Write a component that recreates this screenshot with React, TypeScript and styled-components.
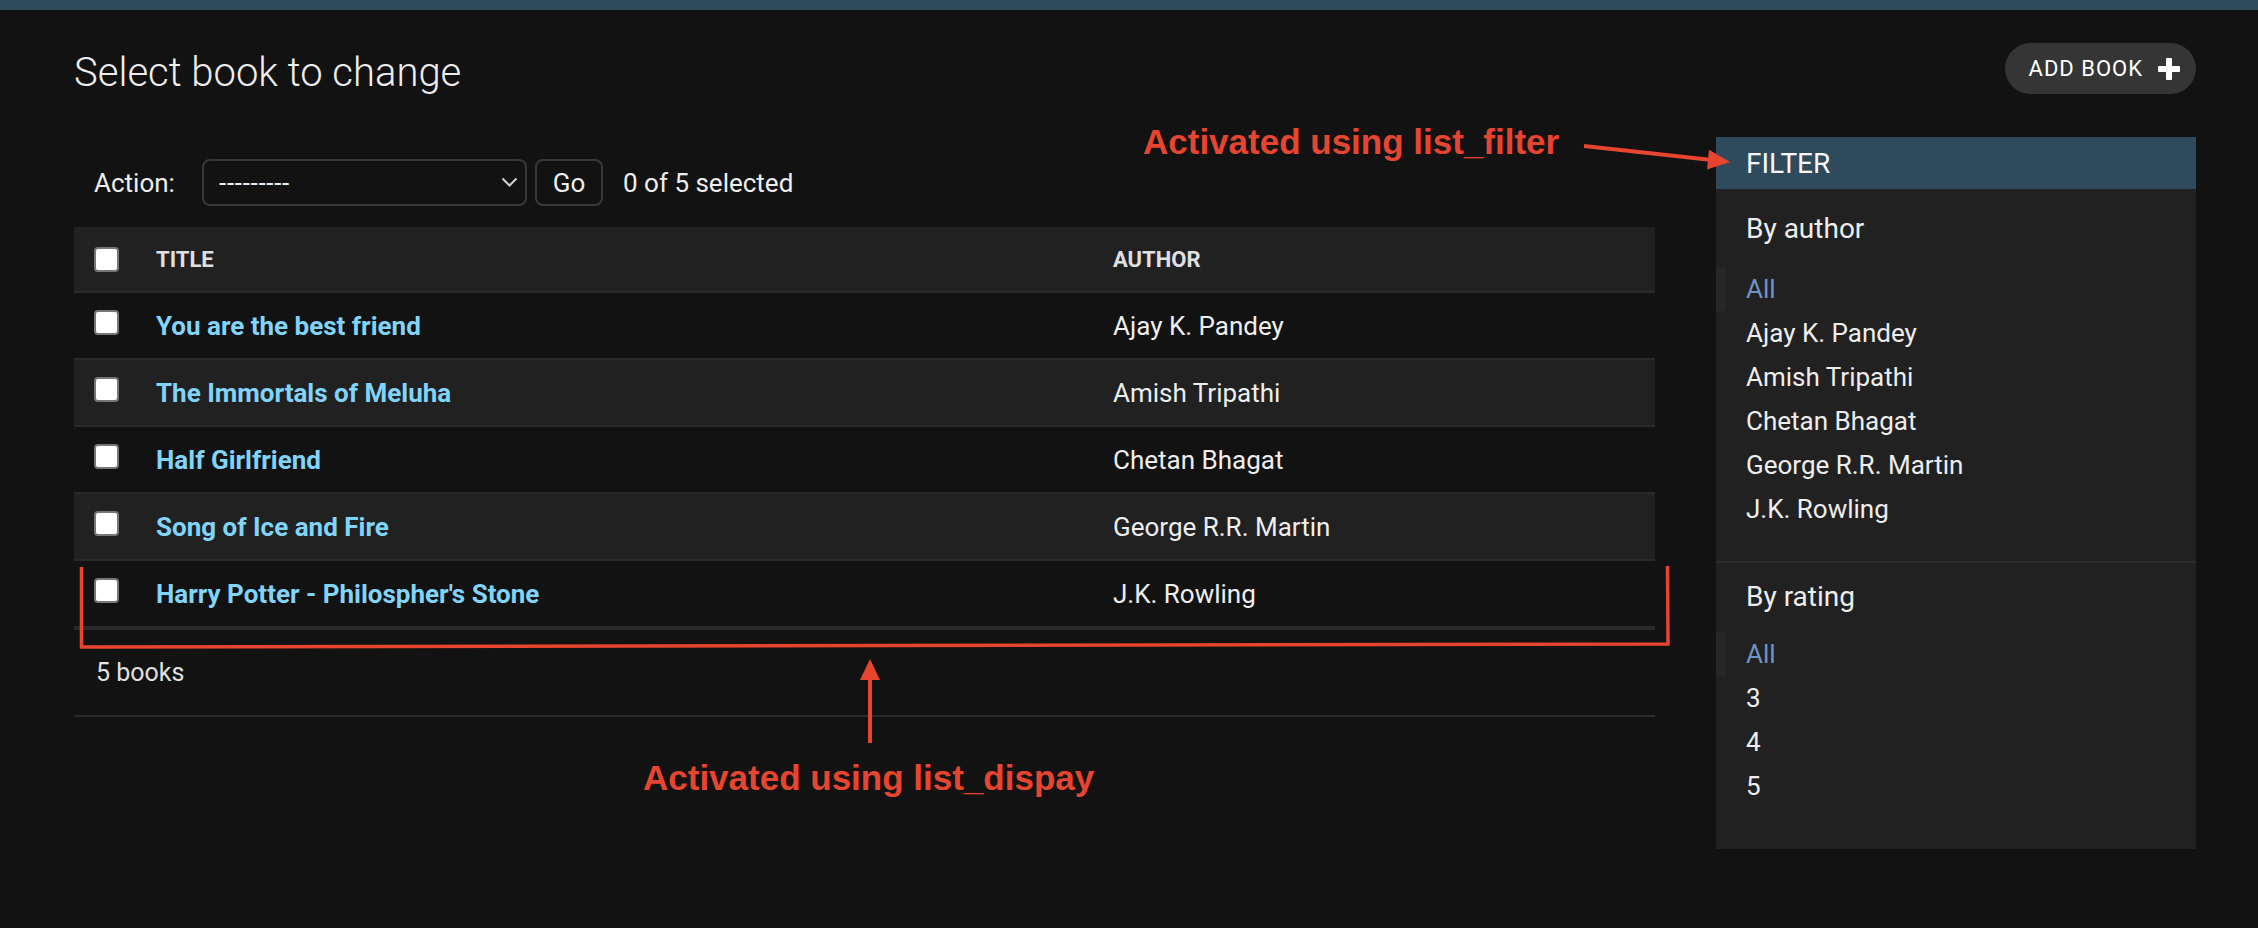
import styled, { createGlobalStyle } from 'styled-components';

const GlobalStyle = createGlobalStyle`
  html, body {
    margin: 0;
    padding: 0;
    background: #121212;
  }

  body {
    font-family: Roboto, "Liberation Sans", sans-serif;
    color: #eeeeee;
  }

  * {
    box-sizing: border-box;
  }
`;

const Page = styled.div`
  position: relative;
  width: 2258px;
  height: 928px;
  background: #121212;
  overflow: hidden;
`;

const TopBar = styled.div`
  height: 10px;
  background: #2f4a5c;
`;

const Content = styled.div`
  padding: 33px 62px 0 74px;
`;

const HeaderRow = styled.div`
  display: flex;
  justify-content: space-between;
  align-items: flex-start;
  height: 52px;
  margin-bottom: 42px;
`;

const Title = styled.h1`
  margin: 6px 0 0;
  font-size: 40px;
  line-height: 48px;
  font-weight: 300;
  color: #eeeeee;
`;

const AddButton = styled.a`
  display: flex;
  align-items: center;
  gap: 15px;
  height: 51px;
  padding: 0 16px 0 24px;
  border-radius: 26px;
  background: #353535;
  color: #ffffff;
  font-size: 22px;
  letter-spacing: 1px;
  text-transform: uppercase;
  text-decoration: none;
`;

const Body = styled.div`
  display: flex;
  align-items: flex-start;
  gap: 61px;
`;

const Main = styled.div`
  flex: 1;
`;

const Actions = styled.div`
  display: flex;
  align-items: center;
  padding: 22px 20px 21px;
  font-size: 26px;
`;

const ActionLabel = styled.label`
  width: 108px;
`;

const SelectBox = styled.div`
  display: flex;
  align-items: center;
  justify-content: space-between;
  width: 325px;
  height: 47px;
  padding: 0 7px 0 15px;
  border: 2px solid #383838;
  border-radius: 8px;
  letter-spacing: 0.7px;
`;

const GoButton = styled.button`
  width: 68px;
  height: 47px;
  margin-left: 8px;
  border: 2px solid #383838;
  border-radius: 8px;
  background: transparent;
  color: #eeeeee;
  font-family: inherit;
  font-size: 26px;
`;

const Counter = styled.span`
  margin-left: 20px;
`;

const GridRow = styled.div<{ $alt?: boolean; $head?: boolean }>`
  display: grid;
  grid-template-columns: 82px 957px 1fr;
  align-items: center;
  height: ${p => (p.$head ? 66 : 67)}px;
  border-bottom: 2px solid #2a2a2a;
  background: ${p => (p.$alt || p.$head ? '#212121' : 'transparent')};
`;

const Check = styled.input.attrs({ type: 'checkbox' })<{ $lift?: boolean }>`
  appearance: none;
  width: 25px;
  height: 25px;
  margin: 0 0 ${p => (p.$lift ? 6 : 0)}px 20px;
  border: 2px solid #767676;
  border-radius: 4px;
  background: #ffffff;
`;

const HeadCell = styled.span`
  font-size: 22px;
  font-weight: 700;
  text-transform: uppercase;
  color: #e0e0e0;
`;

const TitleLink = styled.a`
  font-size: 26px;
  font-weight: 700;
  color: #81d4fa;
  text-decoration: none;
`;

const Cell = styled.span`
  font-size: 26px;
  color: #eeeeee;
`;

const Paginator = styled.p`
  display: flex;
  align-items: center;
  height: 89px;
  margin: 0;
  padding-left: 22px;
  border-top: 2px solid #2a2a2a;
  border-bottom: 2px solid #2a2a2a;
  font-size: 25px;
  color: #e0e0e0;
`;

const FilterPanel = styled.aside`
  width: 480px;
  padding-bottom: 41px;
  background: #212121;
`;

const FilterTitle = styled.h2`
  display: flex;
  align-items: center;
  height: 52px;
  margin: 0;
  padding-left: 30px;
  background: #2f4a5c;
  font-size: 28px;
  font-weight: 400;
  text-transform: uppercase;
  color: #f7f7f7;
`;

const FilterSection = styled.section`
  padding: 20px 0 30px;
  border-bottom: 2px solid #2a2a2a;

  &:last-child {
    padding: 14px 0 0;
    border-bottom: none;
  }
`;

const FilterHeading = styled.h3`
  margin: 0 0 18px;
  padding-left: 30px;
  font-size: 28px;
  line-height: 40px;
  font-weight: 400;
  color: #eeeeee;

  section:last-child > & {
    margin-bottom: 15px;
  }
`;

const FilterList = styled.ul`
  margin: 0;
  padding: 0;
  list-style: none;
`;

const FilterItem = styled.li<{ $selected?: boolean }>`
  display: flex;
  align-items: center;
  height: 44px;
  padding-left: ${p => (p.$selected ? 20 : 30)}px;
  border-left: ${p => (p.$selected ? '10px solid #272727' : 'none')};
  font-size: 26px;
  color: ${p => (p.$selected ? '#6f94c6' : '#eeeeee')};
`;

const Overlay = styled.svg`
  position: absolute;
  top: 0;
  left: 0;
  width: 2258px;
  height: 928px;
  pointer-events: none;
`;

const Note = styled.div<{ $x: number; $y: number }>`
  position: absolute;
  left: ${p => p.$x}px;
  top: ${p => p.$y}px;
  font-family: "Liberation Sans", Arial, sans-serif;
  font-size: 35px;
  line-height: 35px;
  font-weight: 700;
  color: #e84530;
  white-space: nowrap;
`;

const books = [
  { title: 'You are the best friend', author: 'Ajay K. Pandey' },
  { title: 'The Immortals of Meluha', author: 'Amish Tripathi' },
  { title: 'Half Girlfriend', author: 'Chetan Bhagat' },
  { title: 'Song of Ice and Fire', author: 'George R.R. Martin' },
  { title: "Harry Potter - Philospher's Stone", author: 'J.K. Rowling' },
];

const authors = ['Ajay K. Pandey', 'Amish Tripathi', 'Chetan Bhagat', 'George R.R. Martin', 'J.K. Rowling'];
const ratings = ['3', '4', '5'];

const PlusIcon = () => (
  <svg width="22" height="22" viewBox="0 0 22 22" fill="#ffffff">
    <rect x="8" y="0" width="6" height="22" rx="1" />
    <rect x="0" y="8" width="22" height="6" rx="1" />
  </svg>
);

const Chevron = () => (
  <svg width="17" height="11" viewBox="0 0 17 11">
    <polyline points="1.5,1.5 8.5,8.5 15.5,1.5" fill="none" stroke="#cfcfcf" strokeWidth="2" />
  </svg>
);

const App = (): JSX.Element => (
  <Page>
    <GlobalStyle />
    <TopBar />
    <Content>
      <HeaderRow>
        <Title>Select book to change</Title>
        <AddButton href="#">
          Add book
          <PlusIcon />
        </AddButton>
      </HeaderRow>

      <Body>
        <Main>
          <Actions>
            <ActionLabel>Action:</ActionLabel>
            <SelectBox>
              <span>---------</span>
              <Chevron />
            </SelectBox>
            <GoButton>Go</GoButton>
            <Counter>0 of 5 selected</Counter>
          </Actions>

          <GridRow $head>
            <Check />
            <HeadCell>Title</HeadCell>
            <HeadCell>Author</HeadCell>
          </GridRow>
          {books.map((book, i) => (
            <GridRow key={book.title} $alt={i % 2 === 1}>
              <Check $lift />
              <TitleLink href="#">{book.title}</TitleLink>
              <Cell>{book.author}</Cell>
            </GridRow>
          ))}
          <Paginator>5 books</Paginator>
        </Main>

        <FilterPanel>
          <FilterTitle>Filter</FilterTitle>
          <FilterSection>
            <FilterHeading>By author</FilterHeading>
            <FilterList>
              <FilterItem $selected>All</FilterItem>
              {authors.map(a => (
                <FilterItem key={a}>{a}</FilterItem>
              ))}
            </FilterList>
          </FilterSection>
          <FilterSection>
            <FilterHeading>By rating</FilterHeading>
            <FilterList>
              <FilterItem $selected>All</FilterItem>
              {ratings.map(r => (
                <FilterItem key={r}>{r}</FilterItem>
              ))}
            </FilterList>
          </FilterSection>
        </FilterPanel>
      </Body>
    </Content>

    {/* screenshot annotations */}
    <Overlay viewBox="0 0 2258 928">
      <polyline
        points="81.5,567 81.5,647 1668,644 1667.5,566"
        fill="none"
        stroke="#e84530"
        strokeWidth="3.5"
      />
      <line x1="1584" y1="146" x2="1712" y2="160" stroke="#e84530" strokeWidth="4" />
      <polygon points="1730,162 1709,149.7 1707,169.5" fill="#e84530" />
      <line x1="870" y1="743" x2="870" y2="676" stroke="#e84530" strokeWidth="4" />
      <polygon points="870,659 860,680 880,680" fill="#e84530" />
    </Overlay>
    <Note $x={1143} $y={124}>Activated using list_filter</Note>
    <Note $x={643} $y={760}>Activated using list_dispay</Note>
  </Page>
);

export default App;
